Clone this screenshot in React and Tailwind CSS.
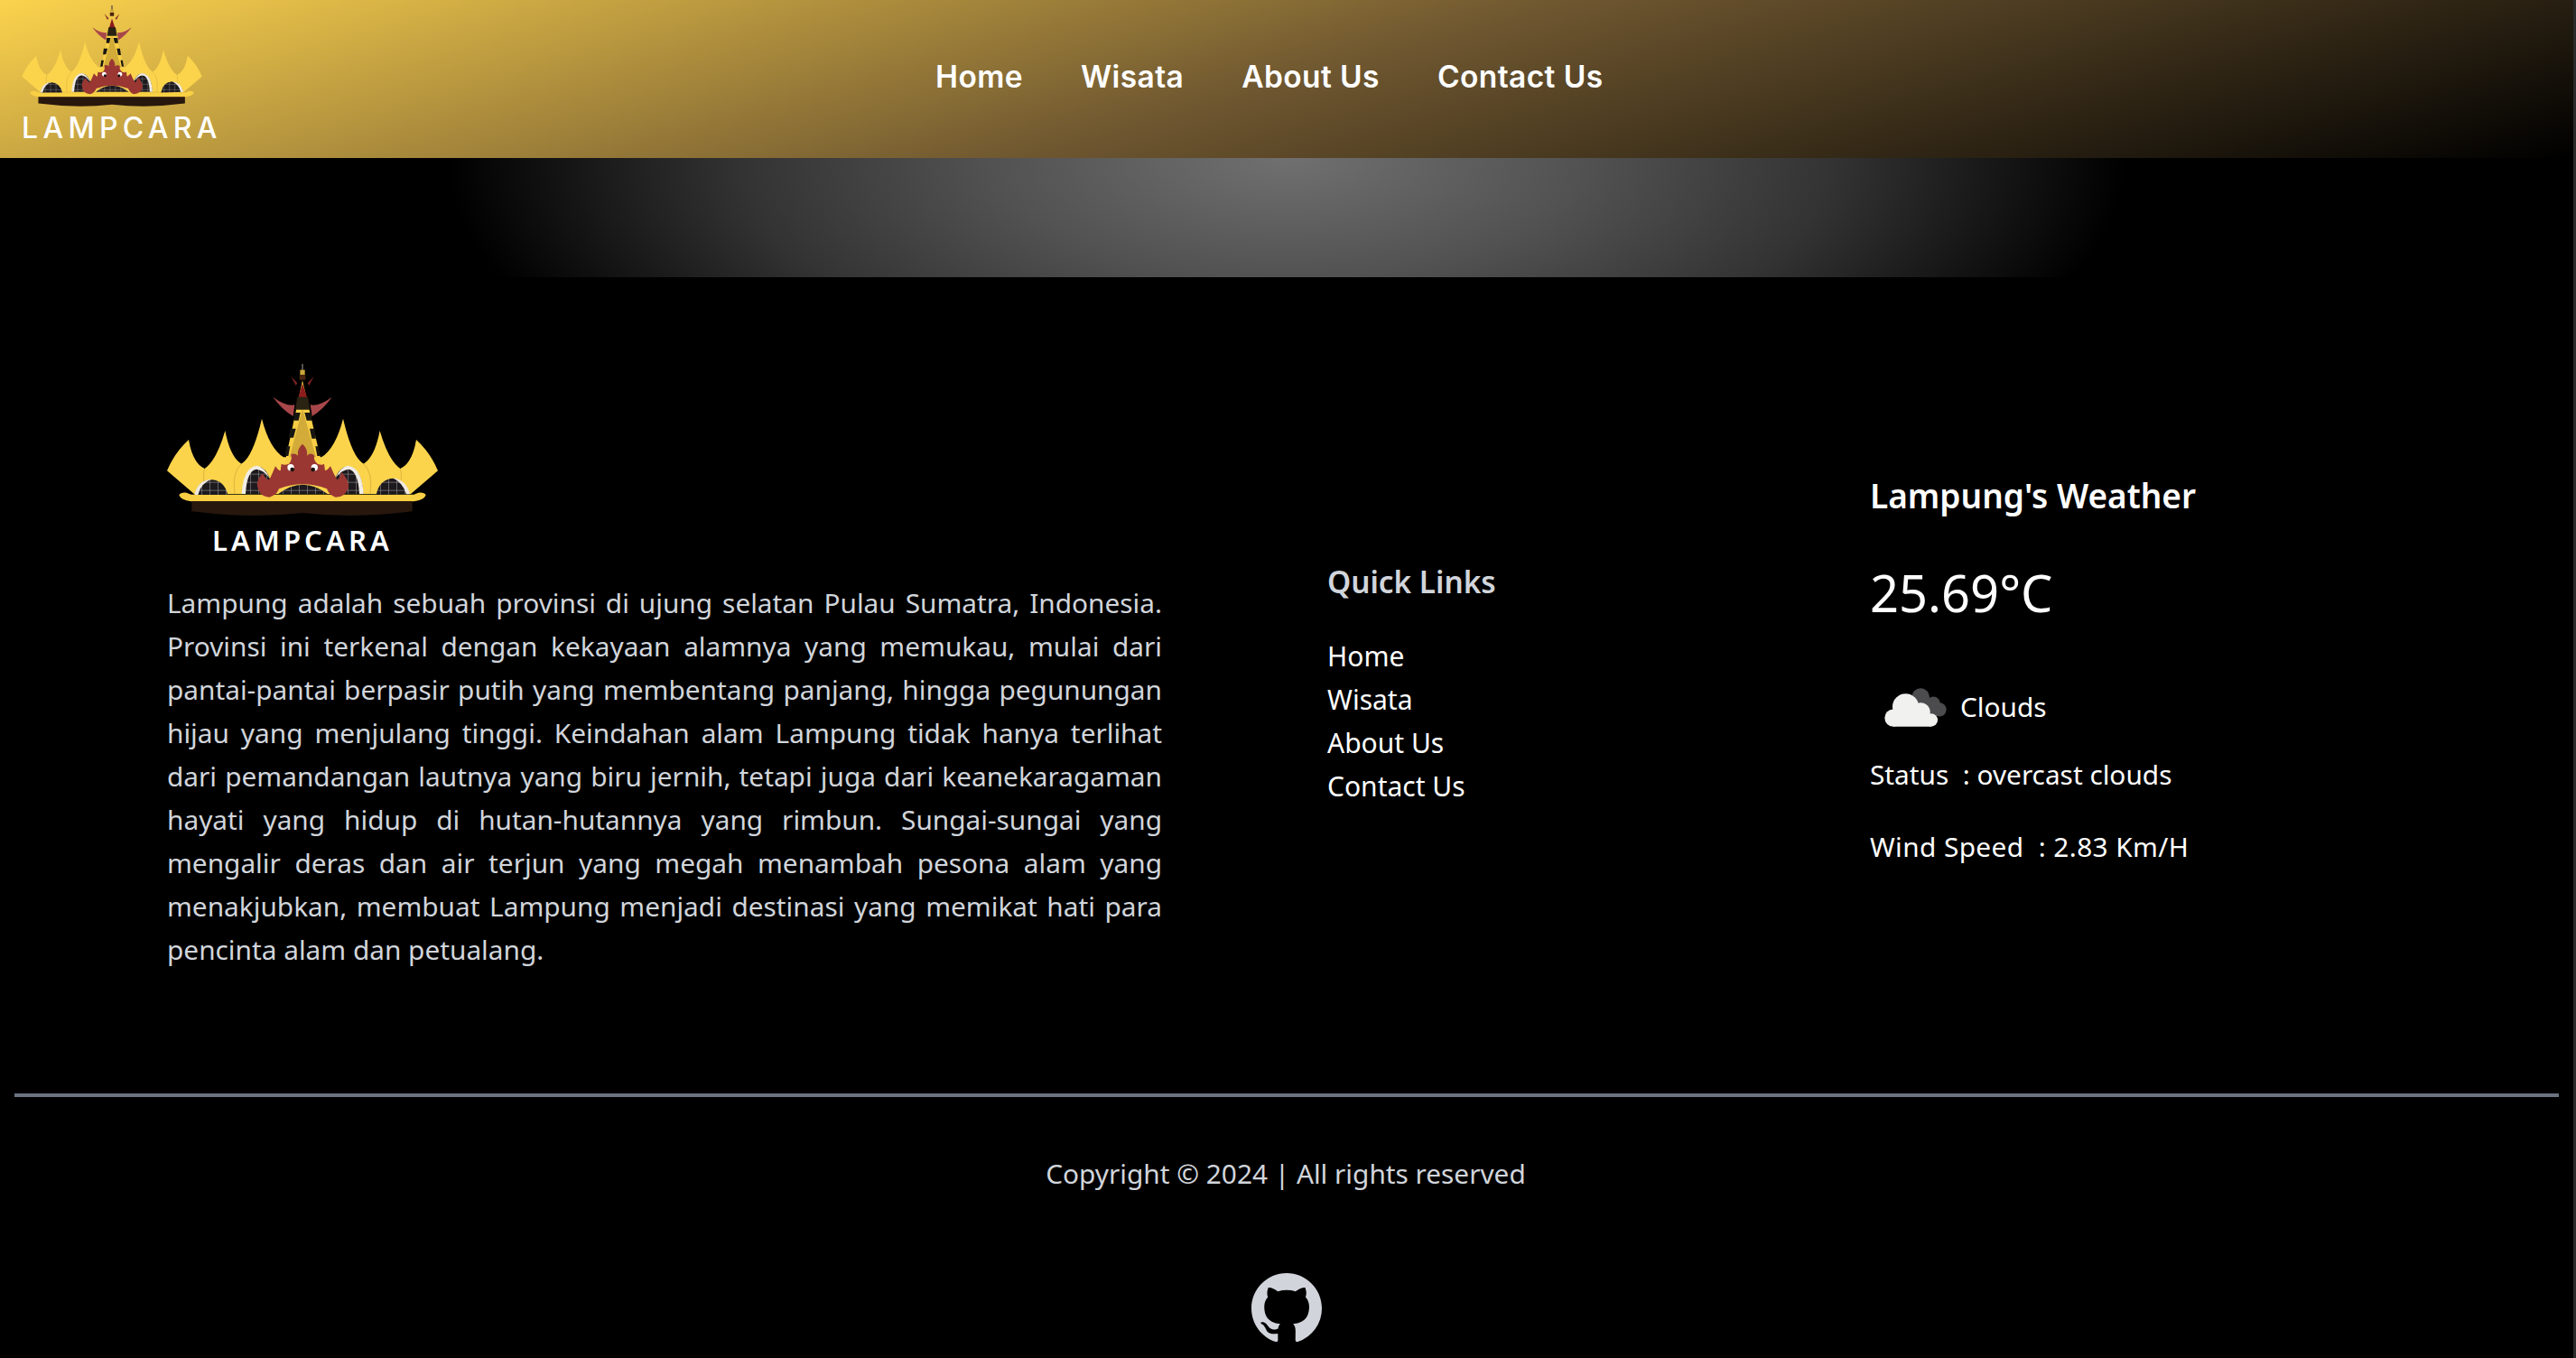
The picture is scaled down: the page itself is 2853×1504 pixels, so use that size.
function Crown({ className, id }) {
  return (
    <svg viewBox="75 40 900 510" className={className}>
      <defs>
        <pattern id={id} x="0" y="0" width="27" height="27" patternUnits="userSpaceOnUse">
          <rect width="27" height="27" fill="#1d1a1e" />
          <path d="M0 0H27M0 0V27" stroke="#a8a4a4" strokeWidth="3" />
        </pattern>
      </defs>
      <path d="M165 472 L75 395 Q100 335 147 292 Q160 370 200 388 Q240 360 268 262 Q285 350 322 372 Q360 350 390 222 Q415 320 462 350 L588 350 Q635 320 660 222 Q690 350 728 372 Q765 350 782 262 Q810 360 850 388 Q890 370 903 292 Q950 335 975 395 L885 472 Z" fill="#fbd44c" />
      <path d="M200 388 Q190 420 208 472 M322 372 Q290 400 300 472 M850 388 Q860 420 842 472 M728 372 Q760 400 750 472" stroke="#dcb53e" strokeWidth="3" fill="none" />
      <path d="M115 476 Q120 466 140 468 L155 474 L895 474 L910 468 Q930 466 935 476 Q930 492 895 497 L155 497 Q120 492 115 476 Z" fill="#f9cf43" />
      <path d="M157 497 L890 497 L890 530 Q700 555 525 535 Q350 555 157 530 Z" fill="#28170d" />
      <path d="M168 475 Q178 425 225 425 Q265 428 277 475 Z" fill={`url(#${id})`} />
      <path d="M166 475 Q178 425 222 424 Q188 435 178 475 Z" fill="#efe9e2" />
      <path d="M770 475 Q780 424 825 420 Q868 430 880 472 Z" fill={`url(#${id})`} />
      <path d="M882 473 Q870 425 825 419 Q858 434 870 473 Z" fill="#efe9e2" />
      <path d="M325 472 Q330 385 375 380 Q405 385 418 425 L385 472 Z" fill={`url(#${id})`} />
      <path d="M323 472 Q328 382 375 378 Q398 382 416 420 Q395 392 372 390 Q340 395 336 472 Z" fill="#f1ece4" />
      <path d="M727 472 Q722 385 675 380 Q645 385 632 425 L665 472 Z" fill={`url(#${id})`} />
      <path d="M728 472 Q722 382 675 378 Q652 382 634 420 Q655 392 678 390 Q710 395 714 472 Z" fill="#f1ece4" />
      <path d="M445 472 Q525 410 608 472 Z" fill={`url(#${id})`} />
      <path d="M525 95 L465 375 L590 375 Z" fill="#f8cf45" />
      <path d="M525 190 L482 350 L570 350 Z" fill="#d2ab38" />
      <path d="M525 105 L507 165 L545 165 Z" fill="#8d1c1c" />
      <path d="M508 150 L543 150 L550 192 L501 192 Z" fill="#2a2212" />
      <path d="M498 202 L518 202 L512 228 L497 228 Z M532 202 L553 202 L556 228 L539 228 Z M484 255 L503 255 L495 285 L480 285 Z M549 255 L565 255 L570 288 L556 288 Z M472 314 L484 314 L478 346 L467 346 Z M568 314 L578 314 L584 346 L574 346 Z" fill="#181612" />
      <path d="M427 150 Q470 182 499 176 L494 214 Q455 190 427 150 Z M623 150 Q580 182 551 176 L557 214 Q595 190 623 150 Z" fill="#a8474a" />
      <path d="M487 82 L508 104 L503 112 Z M563 82 L542 104 L547 112 Z" fill="#7f2222" />
      <rect x="522" y="40" width="6" height="22" fill="#55504a" />
      <rect x="517" y="60" width="16" height="16" fill="#c9a63a" />
      <rect x="515" y="76" width="20" height="17" fill="#4a2410" />
      <path d="M525 306 Q543 322 540 345 Q552 332 565 345 Q560 360 575 372 Q590 378 597 372 L600 395 Q610 392 618 380 Q628 405 640 425 Q650 420 655 400 Q680 425 678 450 Q670 482 635 483 Q615 478 606 455 Q525 425 447 455 Q438 478 415 483 Q380 482 374 440 Q378 415 393 405 Q405 425 415 425 Q425 405 435 380 Q445 395 452 395 L455 372 Q465 378 480 372 Q492 360 487 340 Q500 335 510 345 Q507 322 525 306 Z" fill="#9a3733" />
      <circle cx="486" cy="384" r="11" fill="#fff" />
      <circle cx="565" cy="384" r="11" fill="#fff" />
      <circle cx="491" cy="391" r="7" fill="#1a1210" />
      <circle cx="560" cy="391" r="7" fill="#1a1210" />
    </svg>
  );
}

function Cloud() {
  return (
    <svg viewBox="141 750 208 128" className="w-[69px] h-[43px]">
      <g fill="#4c4c4e">
        <circle cx="262" cy="780" r="30" />
        <circle cx="305" cy="800" r="22" />
        <circle cx="325" cy="821" r="23" />
        <rect x="250" y="790" width="70" height="50" />
      </g>
      <g fill="#f1f1ef">
        <circle cx="171" cy="849" r="29" />
        <circle cx="212" cy="812" r="44" />
        <circle cx="262" cy="830" r="32" />
        <circle cx="297" cy="856" r="22" />
        <rect x="171" y="840" width="126" height="38" />
      </g>
    </svg>
  );
}

const sans = { fontFamily: '"Noto Sans", sans-serif' };
const wide = { fontFamily: 'Inter, sans-serif' };

export default function App() {
  const paragraph = "Lampung adalah sebuah provinsi di ujung selatan Pulau Sumatra, Indonesia. Provinsi ini terkenal dengan kekayaan alamnya yang memukau, mulai dari pantai-pantai berpasir putih yang membentang panjang, hingga pegunungan hijau yang menjulang tinggi. Keindahan alam Lampung tidak hanya terlihat dari pemandangan lautnya yang biru jernih, tetapi juga dari keanekaragaman hayati yang hidup di hutan-hutannya yang rimbun. Sungai-sungai yang mengalir deras dan air terjun yang megah menambah pesona alam yang menakjubkan, membuat Lampung menjadi destinasi yang memikat hati para pencinta alam dan petualang.";
  return (
    <div className="w-[2853px] h-[1504px] overflow-hidden bg-black flex" style={sans}>
      <div className="w-[2850px] h-full flex flex-col">
        <header className="h-[175px] shrink-0 bg-[linear-gradient(164deg,#fcd34d_0%,#6f5730_50%,#000000_100%)] flex items-start pl-[24px]">
          <div className="w-[220px] shrink-0 pt-[6px] flex flex-col items-start">
            <Crown id="grid-a" className="w-[200px] h-[113px]" />
            <span className="text-white font-medium text-[32px] leading-[40px] tracking-[5.3px] mt-[3px] whitespace-nowrap" style={wide}>LAMPCARA</span>
          </div>
          <nav className="flex gap-[64px] ml-[792px] pt-[64px] text-white text-[33.5px] leading-[42px] font-semibold tracking-[0.4px]" style={wide}>
            <span>Home</span><span>Wisata</span><span>About Us</span><span>Contact Us</span>
          </nav>
        </header>
        <div className="h-[132px] shrink-0 bg-[radial-gradient(ellipse_930px_380px_at_50%_0%,#707070_0%,#525252_35%,#333333_65%,#161616_85%,#000000_100%)]" />
        <main className="flex pl-[185px] pt-[96px]">
          <section className="w-[1102px]">
            <div className="w-[300px] flex flex-col items-center">
              <Crown id="grid-b" className="w-[300px] h-[170px]" />
              <span className="text-white font-semibold text-[31px] leading-[40px] tracking-[4.1px] mt-[5px]">LAMPCARA</span>
            </div>
            <p className="text-[#d1d5db] text-[29.8px] leading-[48px] text-justify mt-[26px]">{paragraph}</p>
          </section>
          <section className="ml-[183px] w-[601px] pt-[219px]">
            <h3 className="text-[#d1d5db] text-[33.3px] font-semibold leading-[44px]">Quick Links</h3>
            <ul className="mt-[37px] text-white text-[30px] leading-[48px]">
              <li>Home</li><li>Wisata</li><li>About Us</li><li>Contact Us</li>
            </ul>
          </section>
          <section className="pt-[122px] text-white">
            <h3 className="text-[37px] font-semibold leading-[48px]">Lampung's Weather</h3>
            <div className="text-[56px] leading-[70px] mt-[48px]">25.69°C</div>
            <div className="flex items-center mt-[68px] pl-[16px] gap-[15px] text-[29.8px] leading-[48px]"><Cloud />Clouds</div>
            <p className="text-[29.8px] leading-[48px] mt-[27px]">Status&nbsp; : overcast clouds</p>
            <p className="text-[29.8px] leading-[48px] tracking-[0.4px] mt-[32px]">Wind Speed&nbsp; : 2.83 Km/H</p>
          </section>
        </main>
        <hr className="mx-[16px] mt-[135px] border-t-[4px] border-[#6b7280]" />
        <p className="text-center text-[#d1d5db] text-[29.8px] leading-[48px] mt-[61px] pr-[2px]">Copyright © 2024 | All rights reserved</p>
        <div className="flex justify-center mt-[86px]">
          <svg viewBox="0 0 16 16" className="w-[78px] h-[78px]" fill="#d1d5db">
            <path d="M8 0C3.58 0 0 3.58 0 8c0 3.54 2.29 6.53 5.47 7.59.4.07.55-.17.55-.38 0-.19-.01-.82-.01-1.49-2.01.37-2.53-.49-2.69-.94-.09-.23-.48-.94-.82-1.13-.28-.15-.68-.52-.01-.53.63-.01 1.08.58 1.23.82.72 1.21 1.87.87 2.33.66.07-.52.28-.87.51-1.07-1.78-.2-3.64-.89-3.64-3.95 0-.87.31-1.59.82-2.15-.08-.2-.36-1.02.08-2.12 0 0 .67-.21 2.2.82.64-.18 1.32-.27 2-.27s1.36.09 2 .27c1.53-1.04 2.2-.82 2.2-.82.44 1.1.16 1.92.08 2.12.51.56.82 1.27.82 2.15 0 3.07-1.87 3.75-3.65 3.95.29.25.54.73.54 1.48 0 1.07-.01 1.93-.01 2.2 0 .21.15.46.55.38A8.01 8.01 0 0 0 16 8c0-4.42-3.58-8-8-8z" />
          </svg>
        </div>
      </div>
      <div className="w-[3px] h-full bg-[#2b2b2b]" />
    </div>
  );
}
